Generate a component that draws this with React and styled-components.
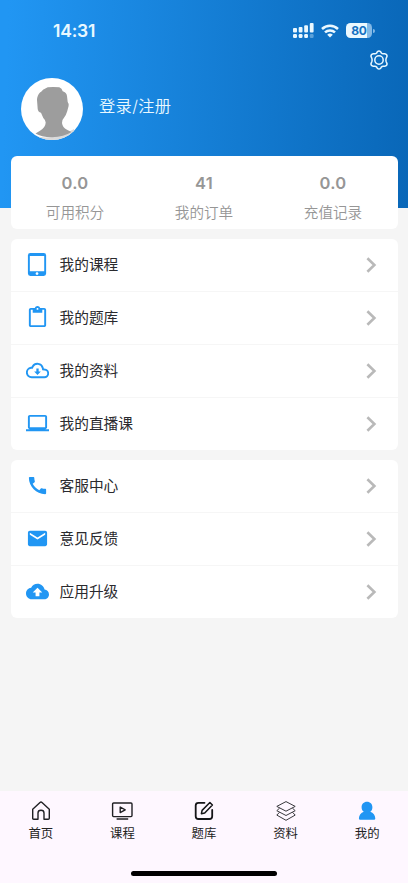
import React from "react";
import styled, { createGlobalStyle } from "styled-components";

const Global = createGlobalStyle`
  * { box-sizing: border-box; }
  body { margin: 0; background: #f5f5f5; font-family: Inter, "Noto Sans CJK SC", sans-serif; }
`;
const Screen = styled.div`
  width: 408px; height: 883px; display: flex; flex-direction: column;
  background: #f5f5f5; overflow: hidden;
`;
const Header = styled.header`
  height: 208px; flex: none; display: flex; flex-direction: column;
  background: linear-gradient(92deg, #2196f3 0%, #2196f3 2%, #0967b8 100%);
  color: #e9f8ff;
`;
const StatusBar = styled.div`
  height: 48px; display: flex; justify-content: space-between; align-items: flex-start;
  padding: 20px 35px 0 53px;
`;
const Time = styled.span`
  font-size: 17.5px; line-height: 22px; font-weight: 600; letter-spacing: -0.2px;
`;
const StatusIcons = styled.div`
  display: flex; align-items: center; gap: 7px; height: 21px;
`;
const Battery = styled.div`
  width: 26px; height: 15px; border-radius: 4.5px;
  background: linear-gradient(90deg, #eaf8ff 80%, #83b9e6 80%);
  color: #1471c2; font-size: 12px; line-height: 15px; font-weight: 700; text-align: center;
  letter-spacing: -0.2px;
`;
const BatteryTip = styled.div`
  width: 1.5px; height: 4px; margin-left: -6px; margin-right: -1.5px; border-radius: 0 2px 2px 0; background: #83b9e6;
`;
const Tools = styled.div`
  display: flex; justify-content: flex-end; padding: 2px 19px 0 0; height: 30px;
`;
const Profile = styled.div`
  display: flex; align-items: center; gap: 16px; height: 62px; padding-left: 21px;
`;
const Avatar = styled.div`
  width: 62px; height: 62px; border-radius: 50%; overflow: hidden; background: #fff;
`;
const Login = styled.span`
  font-size: 16.3px; line-height: 24px; padding-bottom: 6px; font-weight: 350; letter-spacing: 0.3px;
`;
const Content = styled.main`
  flex: 1; display: flex; flex-direction: column; gap: 10px; margin-top: -52px;
  padding: 0 10.5px; position: relative;
`;
const Card = styled.section`
  background: #fff; border-radius: 6px; flex: none;
`;
const Stats = styled(Card)`
  height: 72.5px; display: grid; grid-template-columns: repeat(3, 1fr);
`;
const Stat = styled.div`
  display: flex; flex-direction: column; align-items: center; color: #969696;
`;
const Value = styled.b`
  font-size: 16.5px; line-height: 22px; margin-top: 16px; font-weight: 600; letter-spacing: 0.3px;
`;
const Label = styled.span`
  font-size: 14.6px; line-height: 22px; margin-top: 8px; font-weight: 350;
`;
const Row = styled.div`
  height: ${(p) => (p.$last ? "52px" : "53px")}; display: flex; align-items: center;
  padding: 0 20.5px 0 15px; color: #2a2a2e;
  border-bottom: ${(p) => (p.$last ? "0" : "1px solid #f6f6f6")};
`;
const RowText = styled.span`
  flex: 1; margin-left: 11px; font-size: 14.7px; line-height: 22px; padding-top: 1px;
`;
const Nav = styled.nav`
  height: 92px; flex: none; background: #fef7ff; display: grid;
  grid-template-columns: repeat(5, 1fr); grid-template-rows: 80px 5px;
`;
const Tab = styled.div`
  display: flex; flex-direction: column; align-items: center; padding-top: 9px; color: #222;
`;
const TabText = styled.span`
  font-size: 12.4px; line-height: 18px; margin-top: 3px;
`;
const HomeBar = styled.div`
  grid-column: 1 / -1; justify-self: center; width: 146px; height: 5px; border-radius: 3px; background: #000;
`;

const Icon = ({ d, size = 23, color = "#2196f3", children }) => (
  <svg width={size} height={size} viewBox="0 0 24 24" fill={color} display="block">
    {d ? <path d={d} /> : children}
  </svg>
);

const paths = {
  tablet: "M18.5 0h-14A2.5 2.5 0 0 0 2 2.5v19A2.5 2.5 0 0 0 4.5 24h14a2.5 2.5 0 0 0 2.5-2.5v-19A2.5 2.5 0 0 0 18.5 0zm-7 23c-.83 0-1.5-.67-1.5-1.5s.67-1.5 1.5-1.5 1.5.67 1.5 1.5-.67 1.5-1.5 1.5zm7.5-4H4V3h15z",
  clipboard: "M19 2h-4.18C14.4.84 13.3 0 12 0c-1.3 0-2.4.84-2.82 2H5c-1.1 0-2 .9-2 2v16c0 1.1.9 2 2 2h14c1.1 0 2-.9 2-2V4c0-1.1-.9-2-2-2zm-7 0c.55 0 1 .45 1 1s-.45 1-1 1-1-.45-1-1 .45-1 1-1zm7 18H5V4h2v3h10V4h2v16z",
  laptop: "M20 18c1.1 0 1.99-.9 1.99-2L22 5c0-1.1-.9-2-2-2H4c-1.1 0-2 .9-2 2v11c0 1.1.9 2 2 2H0v2h24v-2h-4zM4 5h16v11H4V5z",
  phone: "M20.01 15.38c-1.23 0-2.42-.2-3.53-.56-.35-.12-.74-.03-1.01.24l-1.57 1.97c-2.83-1.35-5.48-3.9-6.89-6.83l1.95-1.66c.27-.28.35-.67.24-1.02-.37-1.11-.56-2.3-.56-3.53 0-.54-.45-.99-.99-.99H4.19C3.65 3 3 3.24 3 3.99 3 13.28 10.73 21 20.01 21c.71 0 .99-.63.99-1.18v-3.45c0-.54-.45-.99-.99-.99z",
  mail: "M20 4H4c-1.1 0-1.99.9-1.99 2L2 18c0 1.1.9 2 2 2h16c1.1 0 2-.9 2-2V6c0-1.1-.9-2-2-2zm0 4l-8 5-8-5V6l8 5 8-5v2z",
  upload: "M19.35 10.04C18.67 6.59 15.64 4 12 4 9.11 4 6.6 5.64 5.35 8.04 2.34 8.36 0 10.91 0 14c0 3.31 2.69 6 6 6h13c2.76 0 5-2.24 5-5 0-2.64-2.05-4.78-4.65-4.96zM14 13v4h-4v-4H7l5-5 5 5h-3z",
};

const CloudDown = () => (
  <Icon>
    <path d="M6 19h13a4 4 0 0 0 .3-8l-1.5-.1-.3-1.5A5.7 5.7 0 0 0 7 7.9l-.6 1.2-1.3.1A4.93 4.93 0 0 0 6 19z" fill="none" stroke="#2196f3" strokeWidth="2" />
    <path d="M10.8 10h2.4v3h2.3L12 16.7 8.5 13h2.3z" />
  </Icon>
);

const Signal = () => (
  <svg width="21" height="15" viewBox="0 0 21 15" fill="#eaf8ff">
    <rect x="0" y="5" width="4" height="4.5" rx="1" />
    <rect x="5.7" y="4" width="3.8" height="5.5" rx="1" />
    <rect x="11.2" y="2.2" width="3.8" height="7.3" rx="1" />
    <rect x="16.8" y="0" width="3.8" height="9.5" rx="1" />
    <rect x="0" y="11" width="4" height="4" rx="1.2" />
    <rect x="5.7" y="11" width="3.8" height="4" rx="1.2" />
    <rect x="11.2" y="11" width="3.8" height="4" rx="1.2" />
    <rect x="16.8" y="11" width="3.8" height="4" rx="1.2" opacity=".35" />
  </svg>
);
const Wifi = () => (
  <svg width="18" height="14" viewBox="0 0 18 14" fill="none" stroke="#eaf8ff" strokeWidth="2.5">
    <path d="M1 5a11.5 11.5 0 0 1 16 0M4 8.4a7.2 7.2 0 0 1 10 0" />
    <path d="M9 13.6 6.2 10.8a4 4 0 0 1 5.6 0z" fill="#eaf8ff" stroke="none" />
  </svg>
);
const Gear = () => (
  <svg width="20" height="20" viewBox="0 0 20 20" fill="none" stroke="#e9f8ff" strokeWidth="1.5" strokeLinejoin="round">
    <path d="M8.3 1.8Q10 .1 11.7 1.8L12.4 3Q13.1 3.8 14.1 3.8L15.8 3.7Q18.4 4.3 18 6.4L17.2 8.2Q16.6 10 17.2 11.8L18 13.6Q18.4 15.7 15.8 16.3L14.1 16.2Q13.1 16.2 12.4 17L11.7 18.2Q10 19.9 8.3 18.2L7.6 17Q6.9 16.2 5.9 16.2L4.2 16.3Q1.6 15.7 2 13.6L2.8 11.8Q3.4 10 2.8 8.2L2 6.4Q1.6 4.3 4.2 3.7L5.9 3.8Q6.9 3.8 7.6 3Z" />
    <circle cx="10" cy="10" r="4.2" />
  </svg>
);
const Person = () => (
  <svg width="62" height="62" viewBox="0 0 62 62">
    <path d="M10 57Q31 64 53 51V62H10Z" fill="#dadada" />
    <path d="M26.7 9.3Q32 8.6 38.3 9.3Q41 10.5 41.7 13.3Q45.5 14.5 46 18L46.7 24Q48.2 26 47.6 28L46.3 33Q45.2 37 43 39.7Q40.7 42 41 45Q41.5 49.5 46 51.8L50.5 54Q43 59 31 59.2Q20 59.2 14.5 55.5L19 52.7Q24.5 49.5 24.7 44.5Q24.5 42 22.3 40L20 34.7Q17 34 16.7 31L16 22Q16.2 17 19 14.5Q21 13.5 22 11.8Z" fill="#9d9d9d" />
  </svg>
);
const Chevron = () => (
  <svg width="11" height="16" viewBox="0 0 11 16" fill="none" stroke="#b9b9b9" strokeWidth="2.6">
    <path d="M1.4 1.2 8.4 8l-7 6.8" />
  </svg>
);
const tabIcons = {
  home: (
    <g fill="none" stroke="#202024" strokeWidth="1.4" strokeLinejoin="round">
      <path d="M2.7 9.2 10 2.5q1-.9 2 0l7.3 6.7v9q0 1-1 1H14V13q0-2.7-3-2.7T8 13v6.2H3.7q-1 0-1-1Z" />
    </g>
  ),
  course: (
    <g fill="none" stroke="#202024" strokeWidth="1.4" strokeLinejoin="round">
      <rect x="1.6" y="3" width="19.4" height="13.6" rx="1" />
      <path d="M9.2 7v5.6l5-2.8zM5.6 19h11.6" />
    </g>
  ),
  edit: (
    <g fill="none" stroke="#151518" strokeWidth="1.8" strokeLinecap="round" strokeLinejoin="round">
      <path d="M11.5 2.8H5.5Q2.7 2.8 2.7 5.5v10.7q0 2.8 2.8 2.8h10.9q2.8 0 2.8-2.8V10" />
      <path d="m8.4 13.7.7-3.3 7.8-7.9 2.5 2.5-7.7 8z" strokeWidth="1.5" />
    </g>
  ),
  layers: (
    <g fill="none" stroke="#39393d" strokeWidth="1" strokeLinejoin="round">
      <path d="m11 1.6 9.2 4.8L11 11.2 1.8 6.4zM4.6 8.1 1.8 10.7 11 15.5l9.2-4.8-2.8-2.6M4.6 12.2l-2.8 2.9L11 20.3l9.2-5.2-2.8-2.9" />
    </g>
  ),
  user: (
    <g fill="#2196f3">
      <path d="M11 1.8c3.2 0 5.4 2.3 5.4 5.4 0 2-.8 3.5-2.1 4.5 3 .8 4.9 3.5 5 6.8q0 1.3-1.2 1.3H4.1q-1.2 0-1.2-1.3c.1-3.3 2-6 4.9-6.8-1.4-1-2.2-2.5-2.2-4.5 0-3.1 2.2-5.4 5.4-5.4z" />
    </g>
  ),
};

const stats = [["0.0", "可用积分"], ["41", "我的订单"], ["0.0", "充值记录"]];
const learning = [
  ["我的课程", <Icon d={paths.tablet} />],
  ["我的题库", <Icon d={paths.clipboard} />],
  ["我的资料", <CloudDown />],
  ["我的直播课", <Icon d={paths.laptop} />],
];
const service = [
  ["客服中心", <Icon d={paths.phone} />],
  ["意见反馈", <Icon d={paths.mail} />],
  ["应用升级", <Icon d={paths.upload} />],
];
const tabs = [["home", "首页"], ["course", "课程"], ["edit", "题库"], ["layers", "资料"], ["user", "我的"]];

const Menu = ({ items }) => (
  <Card>
    {items.map(([text, icon], i) => (
      <Row key={text} $last={i === items.length - 1}>
        {icon}
        <RowText>{text}</RowText>
        <Chevron />
      </Row>
    ))}
  </Card>
);

export default function App() {
  return (
    <Screen>
      <Global />
      <Header>
        <StatusBar>
          <Time>14:31</Time>
          <StatusIcons><Signal /><Wifi /><Battery>80</Battery><BatteryTip /></StatusIcons>
        </StatusBar>
        <Tools><Gear /></Tools>
        <Profile>
          <Avatar><Person /></Avatar>
          <Login>登录/注册</Login>
        </Profile>
      </Header>
      <Content>
        <Stats>
          {stats.map(([v, l]) => (
            <Stat key={l}><Value>{v}</Value><Label>{l}</Label></Stat>
          ))}
        </Stats>
        <Menu items={learning} />
        <Menu items={service} />
      </Content>
      <Nav>
        {tabs.map(([k, t]) => (
          <Tab key={k}>
            <svg width="22" height="22" viewBox="0 0 22 22">{tabIcons[k]}</svg>
            <TabText>{t}</TabText>
          </Tab>
        ))}
        <HomeBar />
      </Nav>
    </Screen>
  );
}
